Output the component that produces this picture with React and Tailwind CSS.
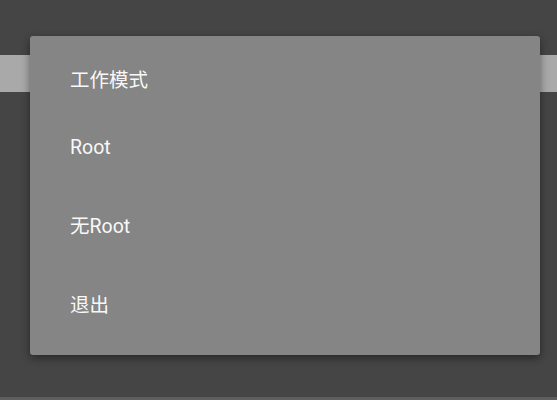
const ITEMS = ['Root', '无Root', '退出']

export default function App() {
  return (
    <div
      className="relative h-[400px] w-[557px] overflow-hidden bg-[#454545]"
      style={{ fontFamily: 'Roboto, "Noto Sans CJK SC", sans-serif' }}
    >
      {/* toolbar strip behind the dialog */}
      <div className="mt-[55px] h-[37px] w-full bg-[#a9a9a9]" />
      <div className="absolute bottom-0 left-0 h-[3px] w-full bg-[#5e5e5e]" />

      {/* dialog */}
      <div className="absolute left-[30px] top-[36px] flex h-[319px] w-[510px] flex-col rounded-[3px] bg-[#858585] pt-[26px] shadow-[0_3px_8px_rgba(0,0,0,0.45)]">
        <div className="flex h-[37px] items-center pl-[40px] text-[19.5px] text-[#f8f8f8]">工作模式</div>
        <div className="mt-[9px] flex flex-col">
          {ITEMS.map((label) => (
            <div key={label} className="flex h-[79px] items-center pl-[40px] text-[19.5px] text-[#f8f8f8]">
              {label}
            </div>
          ))}
        </div>
      </div>
    </div>
  )
}
